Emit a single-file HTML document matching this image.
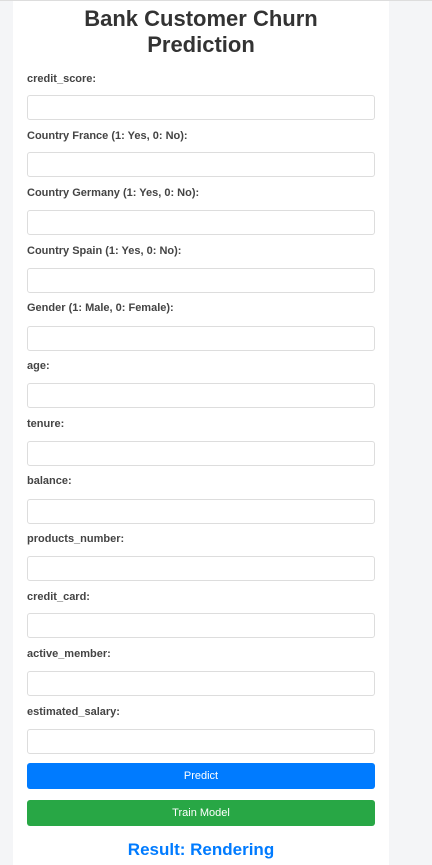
<!DOCTYPE html>
<html><head><style>
html,body{margin:0;padding:0;}
body{width:432px;height:865px;background:#f4f5f7;font-family:"Liberation Sans",Arial,sans-serif;overflow:hidden;position:relative;}
.top{position:absolute;left:0;top:0;width:432px;height:1px;background:#ddd;z-index:2;}
.card{position:absolute;left:13px;top:0;width:376px;height:865px;background:#fff;}
h1{position:absolute;left:0;width:376px;top:6px;margin:0;text-align:center;font-size:22px;line-height:26px;color:#333;font-weight:bold;}
.l{position:absolute;left:14px;font-size:11px;font-weight:bold;color:#444;}
.i{position:absolute;left:14px;width:346px;height:23px;border:1px solid #ddd;border-radius:3px;background:#fff;}
.b{position:absolute;left:14px;width:348px;height:26px;border-radius:3px;color:#fff;font-size:11px;text-align:center;line-height:26px;}
.r{position:absolute;left:0;width:376px;top:840px;text-align:center;font-size:17px;font-weight:bold;color:#007bff;}
</style></head><body>
<div class="top"></div>
<div class="card">
<h1>Bank Customer Churn<br>Prediction</h1>
<div class="l" style="top:73px">credit_score:</div><div class="i" style="top:95px"></div>
<div class="l" style="top:130px">Country France (1: Yes, 0: No):</div><div class="i" style="top:152px"></div>
<div class="l" style="top:187px">Country Germany (1: Yes, 0: No):</div><div class="i" style="top:210px"></div>
<div class="l" style="top:245px">Country Spain (1: Yes, 0: No):</div><div class="i" style="top:268px"></div>
<div class="l" style="top:302px">Gender (1: Male, 0: Female):</div><div class="i" style="top:326px"></div>
<div class="l" style="top:360px">age:</div><div class="i" style="top:383px"></div>
<div class="l" style="top:418px">tenure:</div><div class="i" style="top:441px"></div>
<div class="l" style="top:475px">balance:</div><div class="i" style="top:499px"></div>
<div class="l" style="top:533px">products_number:</div><div class="i" style="top:556px"></div>
<div class="l" style="top:591px">credit_card:</div><div class="i" style="top:613px"></div>
<div class="l" style="top:648px">active_member:</div><div class="i" style="top:671px"></div>
<div class="l" style="top:706px">estimated_salary:</div><div class="i" style="top:729px"></div>
<div class="b" style="top:763px;background:#007bff">Predict</div>
<div class="b" style="top:800px;background:#28a745">Train Model</div>
<div class="r">Result: Rendering</div>
</div>
</body></html>
